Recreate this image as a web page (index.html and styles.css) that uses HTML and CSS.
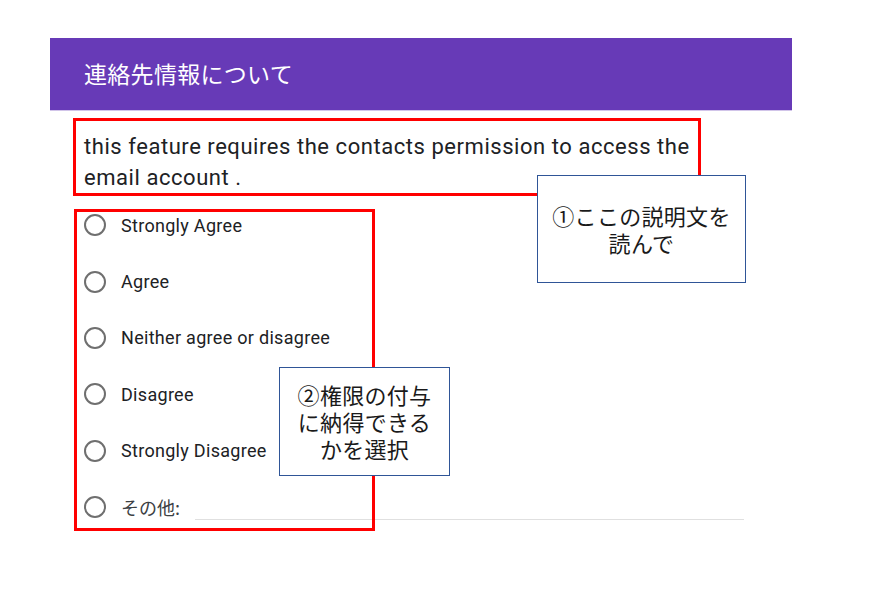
FILE: index.html
```html
<!DOCTYPE html>
<html lang="ja">
<head>
<meta charset="utf-8">
<title>連絡先情報について</title>
<link rel="stylesheet" href="styles.css">
</head>
<body>
<div class="page">
  <div class="form">
    <div class="header">連絡先情報について</div>
    <div class="rule"></div>
    <div class="desc">this feature requires the contacts permission to access the email account .</div>
    <div class="options">
      <div class="option"><span class="radio"></span><span class="label">Strongly Agree</span></div>
      <div class="option"><span class="radio"></span><span class="label">Agree</span></div>
      <div class="option"><span class="radio"></span><span class="label">Neither agree or disagree</span></div>
      <div class="option"><span class="radio"></span><span class="label">Disagree</span></div>
      <div class="option"><span class="radio"></span><span class="label">Strongly Disagree</span></div>
      <div class="option"><span class="radio"></span><span class="label ja">その他:</span><span class="other-input"></span></div>
    </div>
  </div>
  <div class="mark mark-desc"></div>
  <div class="mark mark-options"></div>
  <div class="callout callout-1">①ここの説明文を<br>読んで</div>
  <div class="callout callout-2">②権限の付与<br>に納得できる<br>かを選択</div>
</div>
</body>
</html>
```
FILE: styles.css
```css
* { box-sizing: border-box; }
html, body { margin: 0; padding: 0; background: #ffffff; }
.page {
  position: relative;
  width: 876px;
  height: 591px;
  font-family: Roboto, "Noto Sans CJK JP", sans-serif;
}
.form {
  margin-left: 50px;
  width: 742px;
  padding-top: 38px;
}
.header {
  height: 72px;
  background: #673ab7;
  color: #ffffff;
  font-family: "Noto Sans CJK JP", sans-serif;
  font-size: 23px;
  letter-spacing: 0.3px;
  padding-left: 34px;
  padding-bottom: 2px;
  display: flex;
  align-items: center;
}
.rule {
  height: 1px;
  background: #d1c4e9;
}
.desc {
  width: 654px;
  padding: 20px 0 0 34px;
  font-size: 22px;
  letter-spacing: 0.55px;
  line-height: 31px;
  color: #202124;
}
.options {
  margin-top: 4px;
}
.option {
  height: 56.4px;
  display: flex;
  align-items: center;
  padding-left: 34px;
  gap: 15px;
}
.radio {
  width: 22px;
  height: 22px;
  border: 2px solid #6f6f6f;
  border-radius: 50%;
  flex: none;
}
.label {
  font-size: 18px;
  letter-spacing: 0.3px;
  color: #202124;
}
.label.ja {
  font-family: "Noto Sans CJK JP", sans-serif;
  font-size: 18px;
  letter-spacing: 0;
  color: #3c4043;
}
.other-input {
  flex: 1;
  height: 26px;
  margin-right: 48px;
  border-bottom: 1px solid #e0e0e0;
}
.mark {
  position: absolute;
  border: 3px solid #ff0000;
}
.mark-desc {
  left: 73px;
  top: 118px;
  width: 628px;
  height: 78px;
}
.mark-options {
  left: 74px;
  top: 209px;
  width: 301px;
  height: 322px;
}
.callout {
  position: absolute;
  background: #ffffff;
  border: 1px solid #2f5597;
  display: flex;
  align-items: center;
  justify-content: center;
  text-align: center;
  font-family: "Noto Sans CJK JP", sans-serif;
  font-size: 22px;
  line-height: 27px;
  color: #1a1a1a;
  letter-spacing: 0.3px;
}
.callout-1 {
  left: 537px;
  top: 175px;
  width: 209px;
  height: 108px;
}
.callout-2 {
  left: 279px;
  top: 367px;
  width: 171px;
  height: 109px;
}
```
